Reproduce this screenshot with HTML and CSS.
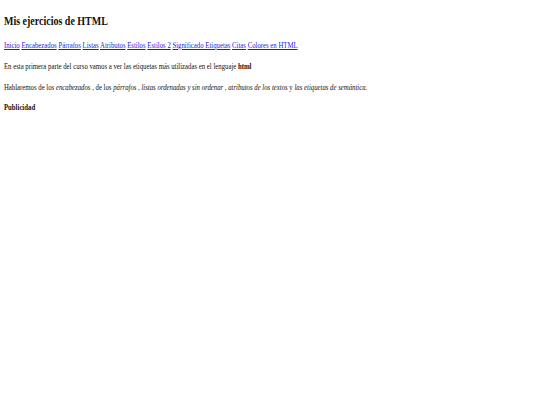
FILE: index.html
```html
<!DOCTYPE html>
<html lang="es">
<head>
<meta charset="utf-8">
<title>Mis ejercicios de HTML</title>
<link rel="stylesheet" href="styles.css">
</head>
<body>
<div class="page">
  <h2 class="title">Mis ejercicios de HTML</h2>
  <p class="nav">
    <a href="#">Inicio</a>
    <a href="#">Encabezados</a>
    <a href="#">Párrafos</a>
    <a href="#">Listas</a>
    <a href="#">Atributos</a>
    <a href="#">Estilos</a>
    <a href="#">Estilos 2</a>
    <a href="#">Significado Etiquetas</a>
    <a href="#">Citas</a>
    <a href="#">Colores en HTML</a>
  </p>
  <p class="text">En esta primera parte del curso vamos a ver las etiquetas más utilizadas en el lenguaje <b>html</b></p>
  <p class="text">Hablaremos de los <i>encabezados</i> , de los <i>párrafos</i> , <i>listas ordenadas y sin ordenar</i> , <i>atributos de los textos</i> y <i>las etiquetas de semántica.</i></p>
  <p class="text"><b>Publicidad</b></p>
</div>
</body>
</html>
```

FILE: styles.css
```css
html, body {
  margin: 0;
  padding: 0;
  background: #ffffff;
}
body {
  font-family: "Liberation Serif", "Times New Roman", serif;
  color: #111111;
  overflow: hidden;
}
.page {
  box-sizing: border-box;
  width: 540px;
  padding-left: 5.4px;
  transform: scaleX(0.74);
  transform-origin: 0 0;
}
.title {
  font-size: 13.5px;
  line-height: 16px;
  margin: 12.5px 0 0 0;
  font-weight: bold;
}
.nav, .text {
  font-size: 9.13px;
  line-height: 11px;
  margin: 0;
  white-space: nowrap;
}
.nav {
  margin-top: 11.5px;
}
.text {
  margin-top: 9.8px;
}
.nav a {
  color: #1a1ae6;
  text-decoration: underline;
}
```
